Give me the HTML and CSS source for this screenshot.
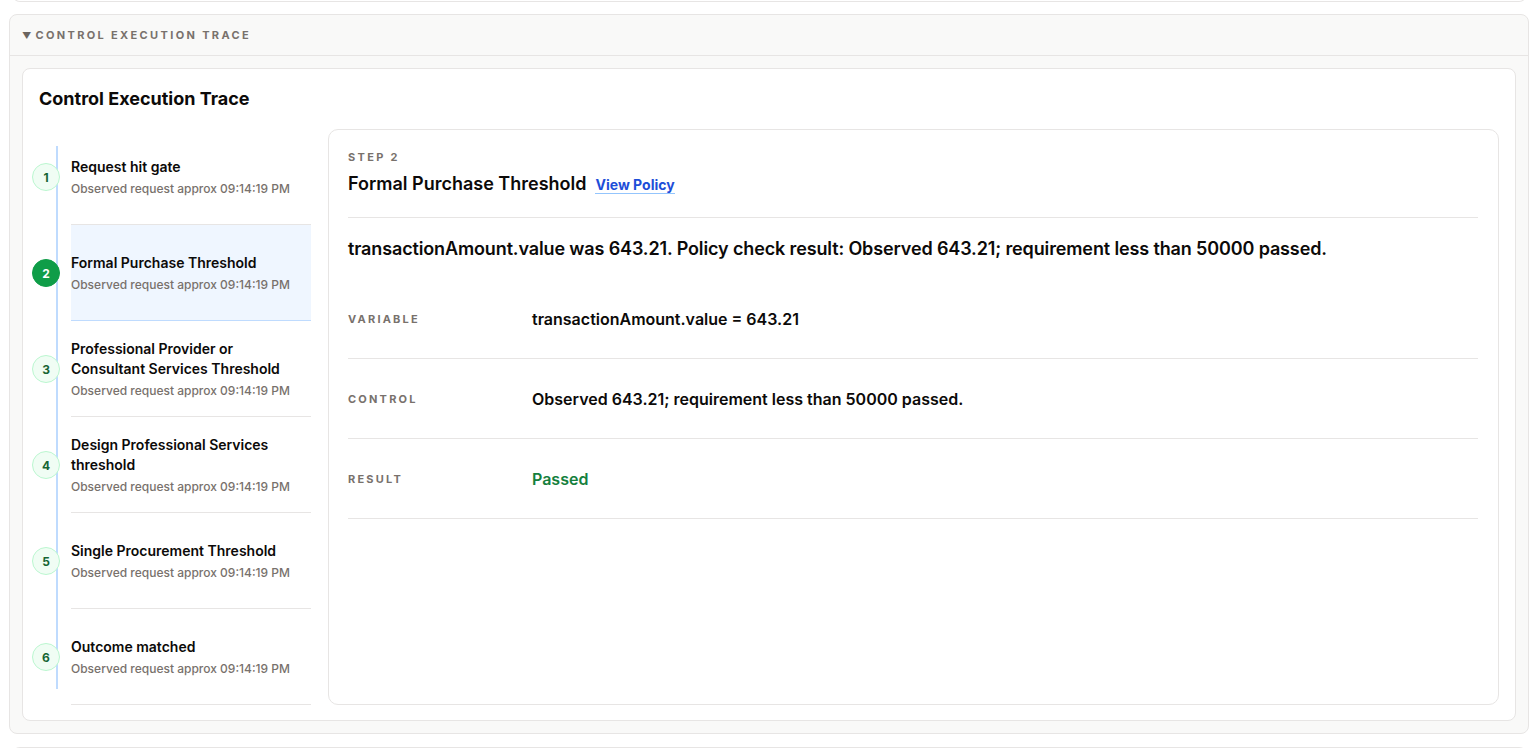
FILE: index.html
```html
<!DOCTYPE html>
<html lang="en">
<head>
    <meta charset="UTF-8">
    <meta name="viewport" content="width=device-width, initial-scale=1.0">
    <title>Control Execution Trace</title>
    <link rel="stylesheet" href="styles.css">
</head>
<body>
    <div class="page">
        <div class="card-edge card-edge-top"></div>

        <section class="panel">
            <header class="panel-head">
                <span class="caret">&#9660;</span>
                <span>Control Execution Trace</span>
            </header>
            <div class="panel-body">
                <div class="trace">
                    <h2>Control Execution Trace</h2>
                    <div class="trace-body">
                        <ol class="steps">
                            <li class="step">
                                <span class="dot">1</span>
                                <div class="step-text">
                                    <strong>Request hit gate</strong>
                                    <small>Observed request approx 09:14:19 PM</small>
                                </div>
                            </li>
                            <li class="step active">
                                <span class="dot">2</span>
                                <div class="step-text">
                                    <strong>Formal Purchase Threshold</strong>
                                    <small>Observed request approx 09:14:19 PM</small>
                                </div>
                            </li>
                            <li class="step">
                                <span class="dot">3</span>
                                <div class="step-text">
                                    <strong>Professional Provider or Consultant Services Threshold</strong>
                                    <small>Observed request approx 09:14:19 PM</small>
                                </div>
                            </li>
                            <li class="step">
                                <span class="dot">4</span>
                                <div class="step-text">
                                    <strong>Design Professional Services threshold</strong>
                                    <small>Observed request approx 09:14:19 PM</small>
                                </div>
                            </li>
                            <li class="step">
                                <span class="dot">5</span>
                                <div class="step-text">
                                    <strong>Single Procurement Threshold</strong>
                                    <small>Observed request approx 09:14:19 PM</small>
                                </div>
                            </li>
                            <li class="step">
                                <span class="dot">6</span>
                                <div class="step-text">
                                    <strong>Outcome matched</strong>
                                    <small>Observed request approx 09:14:19 PM</small>
                                </div>
                            </li>
                        </ol>

                        <div class="detail">
                            <div class="detail-head">
                                <div class="eyebrow">Step 2</div>
                                <div class="detail-title">
                                    <h3>Formal Purchase Threshold</h3>
                                    <a href="#" class="policy-link">View Policy</a>
                                </div>
                            </div>
                            <p class="summary">transactionAmount.value was 643.21. Policy check result: Observed 643.21; requirement less than 50000 passed.</p>
                            <dl class="facts">
                                <div class="fact">
                                    <dt>Variable</dt>
                                    <dd>transactionAmount.value = 643.21</dd>
                                </div>
                                <div class="fact">
                                    <dt>Control</dt>
                                    <dd>Observed 643.21; requirement less than 50000 passed.</dd>
                                </div>
                                <div class="fact">
                                    <dt>Result</dt>
                                    <dd class="passed">Passed</dd>
                                </div>
                            </dl>
                        </div>
                    </div>
                </div>
            </div>
        </section>

        <div class="card-edge card-edge-bottom"></div>
    </div>
</body>
</html>
```

FILE: styles.css
```css
* {
    box-sizing: border-box;
    margin: 0;
    padding: 0;
}

body {
    font-family: Inter, "Noto Sans", Arial, sans-serif;
    background-color: #ffffff;
    color: #0c0a09;
    overflow: hidden;
}

.page {
    padding: 0 11px 0 9px;
}

.card-edge {
    margin: 0 2px 0 3px;
    height: 14px;
    border: 1px solid #e7e5e4;
    background-color: #fff;
}

.card-edge-top {
    margin-top: -12px;
    border-top: none;
    border-radius: 0 0 8px 8px;
}

.card-edge-bottom {
    margin-top: 13px;
    border-bottom: none;
    border-radius: 8px 8px 0 0;
}

.panel {
    margin-top: 12px;
    background-color: #f9f9f8;
    border: 1px solid #e7e5e4;
    border-radius: 8px;
}

.panel-head {
    display: flex;
    align-items: center;
    gap: 4px;
    height: 41px;
    padding: 0 12px;
    border-bottom: 1px solid #e7e5e4;
    font-size: 11px;
    font-weight: 700;
    letter-spacing: 2.35px;
    text-transform: uppercase;
    color: #78716c;
}

.caret {
    font-size: 9px;
    letter-spacing: 0;
    color: #6b6560;
}

.panel-body {
    padding: 12px;
}

.trace {
    background-color: #fff;
    border: 1px solid #e7e5e4;
    border-radius: 8px;
    padding: 18px 16px 15px;
}

.trace h2 {
    font-size: 18px;
    font-weight: 700;
    line-height: 24px;
    margin-bottom: 18px;
}

.trace-body {
    display: flex;
    gap: 17px;
    align-items: stretch;
}

/* timeline */

.steps {
    list-style: none;
    width: 272px;
    flex-shrink: 0;
    position: relative;
}

.steps::before {
    content: "";
    position: absolute;
    left: 17px;
    top: 17px;
    bottom: 16px;
    width: 2px;
    background-color: #bfdbfe;
}

.step {
    display: flex;
    align-items: center;
    height: 96px;
}

.dot {
    position: relative;
    z-index: 1;
    flex-shrink: 0;
    width: 28px;
    height: 28px;
    margin-left: -7px;
    margin-right: 11px;
    border-radius: 50%;
    border: 1px solid #bbf7d0;
    background-color: #f0fdf4;
    color: #166534;
    font-size: 12px;
    font-weight: 700;
    display: flex;
    align-items: center;
    justify-content: center;
}

.step.active .dot {
    background-color: #0f9d48;
    border-color: #0f9d48;
    color: #fff;
}

.step-text {
    flex: 1;
    height: 100%;
    display: flex;
    flex-direction: column;
    justify-content: center;
    border-bottom: 1px solid #e7e5e4;
    padding-top: 2px;
}

.step.active .step-text {
    background-color: #eff6ff;
    border-bottom-color: #bfdbfe;
}

.step-text strong {
    font-size: 14px;
    font-weight: 600;
    line-height: 20px;
    padding-right: 12px;
}

.step-text small {
    margin-top: 3px;
    font-size: 12px;
    line-height: 18px;
    color: #78716c;
    font-weight: 500;
}

/* detail panel */

.detail {
    flex: 1;
    border: 1px solid #e7e5e4;
    border-radius: 10px;
    padding: 19px 20px 0 19px;
}

.detail-head {
    padding-bottom: 21px;
    border-bottom: 1px solid #e7e5e4;
}

.eyebrow {
    font-size: 11px;
    font-weight: 700;
    letter-spacing: 2.3px;
    text-transform: uppercase;
    color: #78716c;
    line-height: 16px;
}

.detail-title {
    display: flex;
    align-items: baseline;
    gap: 9px;
    margin-top: 7px;
}

.detail-title h3 {
    font-size: 18px;
    font-weight: 600;
    line-height: 24px;
}

.policy-link {
    font-size: 14px;
    font-weight: 700;
    color: #1d4ed8;
    text-decoration: none;
    border-bottom: 1px solid #93c5fd;
    line-height: 17px;
}

.summary {
    margin-top: 18px;
    font-size: 18px;
    font-weight: 600;
    line-height: 26px;
    letter-spacing: -0.13px;
}

.facts {
    margin-top: 17px;
}

.fact {
    display: flex;
    align-items: center;
    height: 80px;
    border-bottom: 1px solid #e7e5e4;
}

.fact dt {
    width: 184px;
    flex-shrink: 0;
    font-size: 11px;
    font-weight: 700;
    letter-spacing: 2.2px;
    text-transform: uppercase;
    color: #78716c;
}

.fact dd {
    font-size: 16px;
    font-weight: 600;
}

.fact dd.passed {
    color: #15803d;
}
```
